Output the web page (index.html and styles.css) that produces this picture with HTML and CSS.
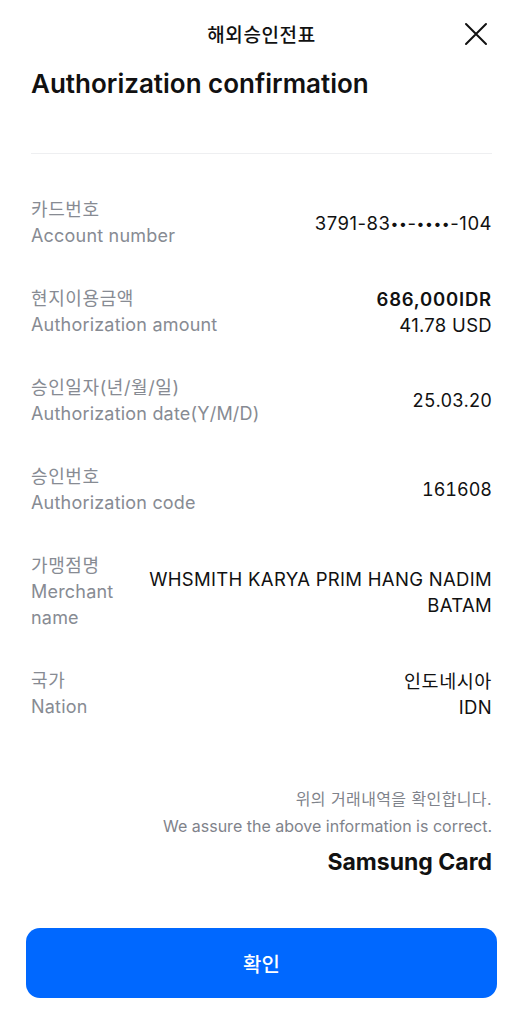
FILE: index.html
```html
<!DOCTYPE html>
<html lang="ko">
<head>
<meta charset="utf-8">
<title>해외승인전표</title>
<link rel="stylesheet" href="styles.css">
</head>
<body>
<div class="page">
  <header class="topbar">
    <div class="topbar-title">해외승인전표</div>
    <button class="close" aria-label="닫기">
      <svg width="24" height="24" viewBox="0 0 24 24"><path d="M2 2 L22 22 M22 2 L2 22" stroke="#111" stroke-width="2" stroke-linecap="round" fill="none"/></svg>
    </button>
  </header>
  <h1 class="title">Authorization confirmation</h1>
  <div class="divider"></div>
  <section class="rows">
    <div class="row">
      <div class="label"><div class="ko">카드번호</div><div>Account number</div></div>
      <div class="value center card">3791-83<span class="dots">••</span>-<span class="dots">••••</span>-104</div>
    </div>
    <div class="row">
      <div class="label"><div class="ko">현지이용금액</div><div>Authorization amount</div></div>
      <div class="value"><div class="strong">686,000IDR</div><div>41.78 USD</div></div>
    </div>
    <div class="row">
      <div class="label"><div class="ko">승인일자(년/월/일)</div><div>Authorization date(Y/M/D)</div></div>
      <div class="value center num">25.03.20</div>
    </div>
    <div class="row">
      <div class="label"><div class="ko">승인번호</div><div>Authorization code</div></div>
      <div class="value center num">161608</div>
    </div>
    <div class="row">
      <div class="label narrow"><div class="ko">가맹점명</div><div>Merchant name</div></div>
      <div class="value center">WHSMITH KARYA PRIM HANG NADIM<br>BATAM</div>
    </div>
    <div class="row">
      <div class="label"><div class="ko">국가</div><div>Nation</div></div>
      <div class="value"><div class="ko">인도네시아</div><div>IDN</div></div>
    </div>
  </section>
  <section class="footer">
    <div class="note ko">위의 거래내역을 확인합니다.</div>
    <div class="note">We assure the above information is correct.</div>
    <div class="brand">Samsung Card</div>
  </section>
  <button class="confirm">확인</button>
</div>
</body>
</html>
```

FILE: styles.css
```css
* { box-sizing: border-box; }
html, body { margin: 0; padding: 0; background: #fff; }
body {
  font-family: Inter, "Noto Sans CJK KR", sans-serif;
  color: #111;
  width: 523px;
  height: 1024px;
  overflow: hidden;
}
.page { padding: 0 31px; }
.topbar {
  position: relative;
  height: 66px;
  display: flex;
  align-items: center;
  justify-content: center;
}
.topbar-title {
  font-size: 19px;
  font-weight: 500;
  letter-spacing: 0.6px;
}
.close {
  position: absolute;
  right: 4px;
  top: 22px;
  width: 24px;
  height: 24px;
  padding: 0;
  border: 0;
  background: none;
}
.close svg { display: block; }
.title {
  margin: 0;
  font-size: 26px;
  font-weight: 600;
  line-height: 36px;
  letter-spacing: 0;
}
.divider {
  height: 1px;
  background: #eeeff1;
  margin-top: 51px;
}
.rows {
  padding-top: 43px;
  display: flex;
  flex-direction: column;
  gap: 37px;
}
.row {
  display: flex;
  justify-content: space-between;
  gap: 20px;
  font-size: 18px;
  line-height: 26px;
}
.label { color: #878b93; flex-shrink: 0; letter-spacing: 0.2px; }
.label .ko { letter-spacing: 0.6px; }
.label.narrow { width: 98px; }
.value {
  text-align: right;
  font-size: 18.5px;
  letter-spacing: 0.3px;
}
.value.card { letter-spacing: 0.5px; }
.value.num {
  font-size: 18px;
  letter-spacing: 0;
  font-variant-numeric: tabular-nums;
}
.value .ko { letter-spacing: 0.6px; }
.dots { font-size: 14px; letter-spacing: 0.6px; vertical-align: 1px; }
.value.center { align-self: center; }
.strong { font-weight: 600; letter-spacing: 0.8px; }
.footer {
  margin-top: 66px;
  text-align: right;
}
.note {
  font-size: 16px;
  line-height: 27px;
  color: #7f838b;
  letter-spacing: 0;
}
.note.ko { letter-spacing: 0.4px; }
.brand {
  margin-top: 6px;
  font-size: 23px;
  font-weight: 700;
  line-height: 32px;
  letter-spacing: 0;
}
.confirm {
  display: block;
  margin: 50px -5px 0;
  width: calc(100% + 10px);
  height: 70px;
  border: 0;
  border-radius: 14px;
  background: #0068ff;
  color: #fff;
  font-family: Inter, "Noto Sans CJK KR", sans-serif;
  font-size: 20px;
  font-weight: 500;
}
```
